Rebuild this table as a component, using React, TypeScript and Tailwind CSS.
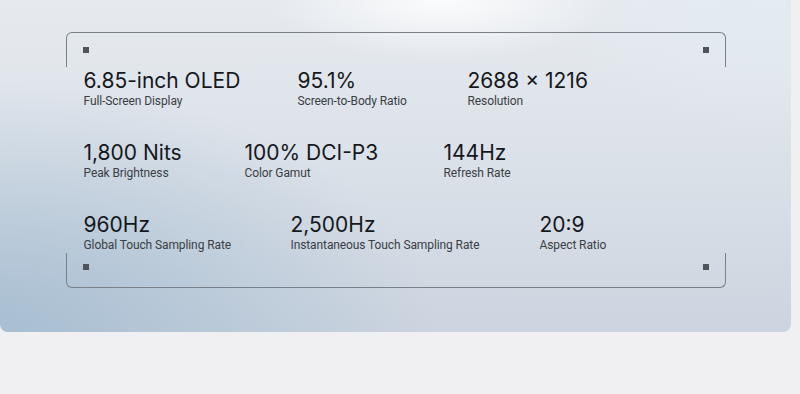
import React from 'react';

type Spec = { value: string; label: string; w: string };

// each row keeps its own column widths
const rows: Spec[][] = [
  [
    { value: '6.85-inch OLED', label: 'Full-Screen Display', w: 'w-[214px]' },
    { value: '95.1%', label: 'Screen-to-Body Ratio', w: 'w-[170px]' },
    { value: '2688 × 1216', label: 'Resolution', w: 'w-auto' },
  ],
  [
    { value: '1,800 Nits', label: 'Peak Brightness', w: 'w-[161px]' },
    { value: '100% DCI-P3', label: 'Color Gamut', w: 'w-[199px]' },
    { value: '144Hz', label: 'Refresh Rate', w: 'w-auto' },
  ],
  [
    { value: '960Hz', label: 'Global Touch Sampling Rate', w: 'w-[207px]' },
    { value: '2,500Hz', label: 'Instantaneous Touch Sampling Rate', w: 'w-[249px]' },
    { value: '20:9', label: 'Aspect Ratio', w: 'w-auto' },
  ],
];

function Dot() {
  return <span className="block h-[6px] w-[6px] bg-[#4f545a]" />;
}

function SpecItem({ spec }: { spec: Spec }) {
  return (
    <div className={`flex shrink-0 flex-col ${spec.w}`}>
      <span className="whitespace-nowrap font-['Inter',sans-serif] text-[21px] leading-[24px] text-[#15181c]">
        {spec.value}
      </span>
      <span className="whitespace-nowrap font-['Roboto',sans-serif] text-[12px] leading-[16px] tracking-[-0.1px] text-[#3a3f45]">
        {spec.label}
      </span>
    </div>
  );
}

export default function App() {
  return (
    <div className="h-[394px] w-[800px] overflow-hidden bg-[#f0f0f2]">
      <div className="relative h-[332px] w-[791px] overflow-hidden rounded-b-[8px] bg-[linear-gradient(180deg,#e6eaef_0%,#dce2e9_45%,#ccd4df_100%)]">
        {/* soft bluish haze on the left, light glow at the top */}
        <div className="pointer-events-none absolute inset-0 bg-[radial-gradient(ellipse_55%_75%_at_0%_100%,rgba(158,184,206,0.8),rgba(158,184,206,0)_100%)]" />
        <div className="pointer-events-none absolute inset-0 bg-[radial-gradient(ellipse_22%_18%_at_56%_0%,rgba(255,255,255,0.85),rgba(255,255,255,0)_100%)]" />
        <div className="pointer-events-none absolute inset-0 bg-[radial-gradient(ellipse_30%_40%_at_100%_0%,rgba(226,236,242,0.9),rgba(226,236,242,0)_100%)]" />

        <div className="relative mx-auto w-[660px] pt-[32px]">
          {/* top bracket */}
          <div className="flex h-[35px] items-start justify-between rounded-t-[6px] border-x-[1.5px] border-t-[1.5px] border-[#78818a] px-[16px] pt-[14px]">
            <Dot />
            <Dot />
          </div>

          <div className="flex flex-col gap-[32px] pl-[18px] pr-[17px] pt-[2px]">
            {rows.map((row, i) => (
              <div key={i} className="flex">
                {row.map((spec) => (
                  <SpecItem key={spec.value} spec={spec} />
                ))}
              </div>
            ))}
          </div>

          {/* bottom bracket */}
          <div className="flex h-[35px] items-start justify-between rounded-b-[6px] border-x-[1.5px] border-b-[1.5px] border-[#78818a] px-[16px] pt-[11px]">
            <Dot />
            <Dot />
          </div>
        </div>
      </div>
    </div>
  );
}
